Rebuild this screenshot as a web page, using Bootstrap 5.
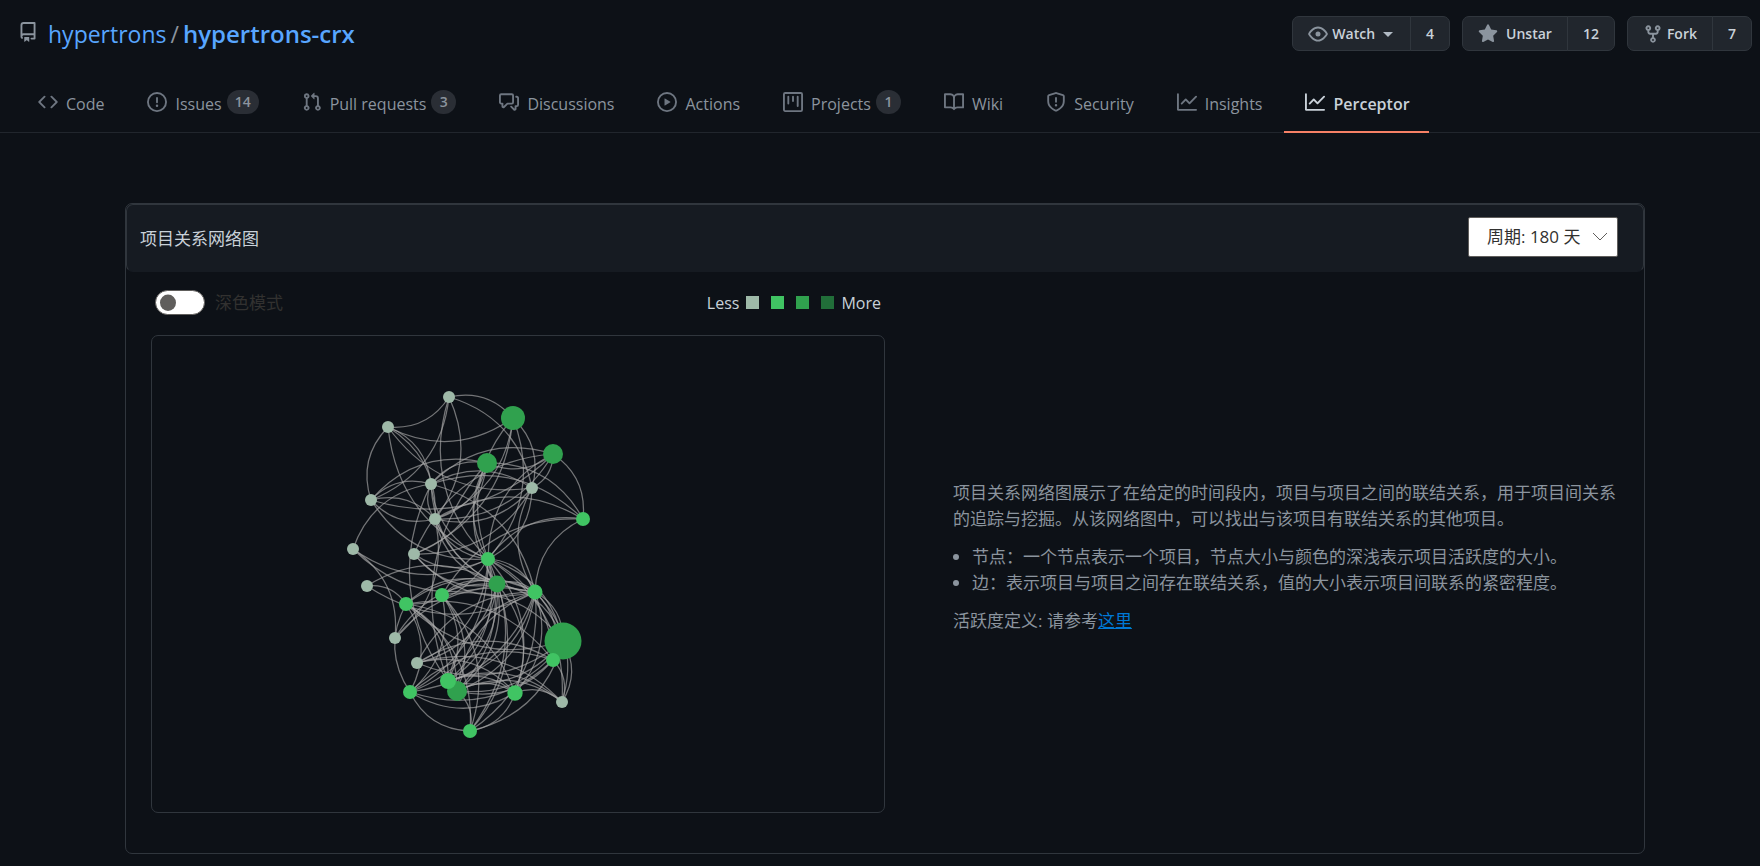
<!DOCTYPE html>
<html lang="zh-CN" data-bs-theme="dark">
<head>
<meta charset="utf-8">
<meta name="viewport" content="width=device-width, initial-scale=1">
<title>hypertrons/hypertrons-crx · Perceptor</title>
<link href="https://cdn.jsdelivr.net/npm/bootstrap@5.3.0/dist/css/bootstrap.min.css" rel="stylesheet">
<style>
  body { background: #0d1117; color: #c9d1d9; font-family: "Open Sans", "Noto Sans CJK SC", sans-serif; font-size: 16px; line-height: 26px; }
  svg.octicon { width: 20px; height: 20px; fill: currentColor; flex: none; }
  .repo-head { padding: 16px 8px 0 18px; }
  .repo-title { font-size: 23px; line-height: 36px; color: #8b949e; }
  .repo-title a { color: #58a6ff; text-decoration: none; }
  .repo-title .repo-name { font-size: 24px; font-weight: 600; }
  .repo-title .octicon { margin-right: 10px; }
  .gh-group .btn { background: #21262d; border: 1px solid #30363d; color: #c9d1d9; font-size: 14px; font-weight: 600; line-height: 25px; padding: 4px 15px; border-radius: 7px; }
  .gh-group .octicon { color: #8b949e; }
  .gh-caret { border: 5px solid transparent; border-top-color: #b1bac4; border-bottom: 0; margin: 2px 2px 0 8px; }
  .repo-tabs { padding-left: 17px; margin-top: 20px; border-bottom: 1px solid #21262d; }
  .repo-tabs .nav-link { color: #8b949e; padding: 18px 22px 13px 21px; gap: 8px; margin-bottom: -1px; border-bottom: 2px solid transparent; border-radius: 0; line-height: 28px; }
  .repo-tabs .nav-link .octicon { color: #6e7681; margin-bottom: 4px; }
  .repo-tabs .nav-link.active { color: #c9d1d9; font-weight: 600; border-bottom-color: #f78166; padding-right: 19px; }
  .repo-tabs .active .octicon { color: #c9d1d9; }
  .tab-count { background: #2a2e35; color: #8b949e; font-size: 14px; font-weight: 600; line-height: 24px; border-radius: 12px; padding: 0 8px; min-width: 25px; text-align: center; margin: 0 0 4px -3px; }
  .page-main { padding: 70px 115px 12px 125px; }
  .panel { border: 1px solid #30363d; border-radius: 7px; }
  .panel-head { background: #161b22; border: 1px solid #30363d; border-bottom-color: #161b22; border-radius: 7px; padding: 12px 25px 14px 13px; }
  .panel-head h1 { color: #c9d1d9; font-size: 17px; line-height: 40px; font-weight: 400; margin: 2px 0 -2px; }
  .period-select { appearance: none; width: 150px; height: 40px; border: 1px solid #605e5c; border-radius: 2px; color: #323130; font-size: 17px; padding: 0 0 0 18px;
    background: #fff url("data:image/svg+xml,%3Csvg xmlns='http://www.w3.org/2000/svg' width='16' height='10' fill='none' stroke='%23605e5c'%3E%3Cpath d='M1 1l7 7 7-7'/%3E%3C/svg%3E") no-repeat right 9px center; }
  .graph-col { padding: 0 0 40px 25px; }
  .graph-tools { height: 63px; padding: 0 4px 2px; }
  .form-switch .mode-toggle.form-check-input { width: 50px; height: 25px; margin: 0; background: #fff url("data:image/svg+xml,%3Csvg xmlns='http://www.w3.org/2000/svg' width='24' height='24' viewBox='-12 -12 24 24'%3E%3Ccircle r='8' fill='%23605e5c'/%3E%3C/svg%3E") no-repeat left center; background-size: 24px 24px; border: 1px solid #605e5c; }
  .mode-label { color: #323130; font-size: 17px; padding-left: 10px; }
  .legend { margin: 0 7px; }
  .swatch { width: 13px; height: 13px; }
  .s1 { background: #9eb9a8; fill: #9eb9a8; } .s2 { background: #40c463; fill: #40c463; }
  .s3 { background: #30a14e; fill: #30a14e; } .s4 { background: #216e39; fill: #216e39; }
  .graph-box { border: 1px solid #30363d; border-radius: 7px; }
  .graph-box svg { display: block; width: 100%; }
  .edge { fill: none; stroke: #aaa; stroke-opacity: .65; stroke-width: 1.25; }
  .note-col { padding: 0 8px 0 68px; color: #8b949e; font-size: 17px; }
  .note-col p { margin-bottom: 12px; }
  .note-col ul { padding-left: 19px; margin-bottom: 12px; }
  .note-col .inner { max-width: 679px; }
  .note-col a { color: #0078d4; }
</style>
</head>
<body>
<header>
  <div class="repo-head d-flex justify-content-between align-items-start">
    <div class="repo-title d-flex align-items-center">
      <svg class="octicon mb-1" viewBox="0 0 16 16"><path fill-rule="evenodd" d="M2 2.5A2.5 2.5 0 014.5 0h8.75a.75.75 0 01.75.75v12.5a.75.75 0 01-.75.75h-2.5a.75.75 0 110-1.5h1.75v-2h-8a1 1 0 00-.714 1.7.75.75 0 01-1.072 1.05A2.495 2.495 0 012 11.5v-9zm10.5-1V9h-8c-.356 0-.694.074-1 .208V2.5a1 1 0 011-1h8zM5 12.25v3.25a.25.25 0 00.4.2l1.45-1.087a.25.25 0 01.3 0L8.6 15.7a.25.25 0 00.4-.2v-3.25a.25.25 0 00-.25-.25h-3.5a.25.25 0 00-.25.25z"/></svg>
      <a href="#">hypertrons</a><span class="mx-1">/</span><a href="#" class="repo-name">hypertrons-crx</a>
    </div>
    <div class="d-flex gh-actions">
      <div class="btn-group gh-group me-2"><button class="btn d-flex align-items-center" type="button"><svg class="octicon me-1" viewBox="0 0 16 16"><path fill-rule="evenodd" d="M1.679 7.932c.412-.621 1.242-1.75 2.366-2.717C5.175 4.242 6.527 3.5 8 3.5c1.473 0 2.824.742 3.955 1.715 1.124.967 1.954 2.096 2.366 2.717a.119.119 0 010 .136c-.412.621-1.242 1.75-2.366 2.717C10.825 11.758 9.473 12.5 8 12.5c-1.473 0-2.824-.742-3.955-1.715C2.92 9.818 2.09 8.69 1.679 8.068a.119.119 0 010-.136zM8 2c-1.981 0-3.67.992-4.933 2.078C1.797 5.169.88 6.423.43 7.1a1.619 1.619 0 000 1.798c.45.678 1.367 1.932 2.637 3.024C4.329 13.008 6.019 14 8 14c1.981 0 3.67-.992 4.933-2.078 1.27-1.091 2.187-2.345 2.637-3.023a1.619 1.619 0 000-1.798c-.45-.678-1.367-1.932-2.637-3.023C11.671 2.992 9.981 2 8 2zm0 8a2 2 0 100-4 2 2 0 000 4z"/></svg>Watch<span class="gh-caret"></span></button><button class="btn" type="button">4</button></div>
      <div class="btn-group gh-group mx-1"><button class="btn d-flex align-items-center" type="button"><svg class="octicon me-2" viewBox="0 0 16 16"><path d="M8 .25a.75.75 0 01.673.418l1.882 3.815 4.21.612a.75.75 0 01.416 1.279l-3.046 2.97.719 4.192a.75.75 0 01-1.088.791L8 12.347l-3.766 1.98a.75.75 0 01-1.088-.79l.72-4.194L.818 6.374a.75.75 0 01.416-1.28l4.21-.611L7.327.668A.75.75 0 018 .25z"/></svg>Unstar</button><button class="btn" type="button">12</button></div>
      <div class="btn-group gh-group ms-2"><button class="btn d-flex align-items-center" type="button"><svg class="octicon me-1" viewBox="0 0 16 16"><path fill-rule="evenodd" d="M5 3.25a.75.75 0 11-1.5 0 .75.75 0 011.5 0zm0 2.122a2.25 2.25 0 10-1.5 0v.878A2.25 2.25 0 005.75 8.5h1.5v2.128a2.251 2.251 0 101.5 0V8.5h1.5a2.25 2.25 0 002.25-2.25v-.878a2.25 2.25 0 10-1.5 0v.878a.75.75 0 01-.75.75h-4.5A.75.75 0 015 6.25v-.878zm3.75 7.378a.75.75 0 11-1.5 0 .75.75 0 011.5 0zm3-8.75a.75.75 0 100-1.5.75.75 0 000 1.5z"/></svg>Fork</button><button class="btn" type="button">7</button></div>
    </div>
  </div>
  <nav class="nav repo-tabs flex-nowrap">
    <a class="nav-link d-flex align-items-center" href="#"><svg class="octicon" viewBox="0 0 16 16"><path fill-rule="evenodd" d="M4.72 3.22a.75.75 0 011.06 1.06L2.06 8l3.72 3.72a.75.75 0 11-1.06 1.06L.47 8.53a.75.75 0 010-1.06l4.25-4.25zm6.56 0a.75.75 0 10-1.06 1.06L13.94 8l-3.72 3.72a.75.75 0 101.06 1.06l4.25-4.25a.75.75 0 000-1.06l-4.25-4.25z"/></svg>Code</a>
    <a class="nav-link d-flex align-items-center" href="#"><svg class="octicon" viewBox="0 0 16 16"><path fill-rule="evenodd" d="M8 1.5a6.5 6.5 0 100 13 6.5 6.5 0 000-13zM0 8a8 8 0 1116 0A8 8 0 010 8zm9 3a1 1 0 11-2 0 1 1 0 012 0zm-.25-6.25a.75.75 0 00-1.5 0v3.5a.75.75 0 001.5 0v-3.5z"/></svg>Issues<span class="tab-count">14</span></a>
    <a class="nav-link d-flex align-items-center" href="#"><svg class="octicon" viewBox="0 0 16 16"><path fill-rule="evenodd" d="M7.177 3.073L9.573.677A.25.25 0 0110 .854v4.792a.25.25 0 01-.427.177L7.177 3.427a.25.25 0 010-.354zM3.75 2.5a.75.75 0 100 1.5.75.75 0 000-1.5zm-2.25.75a2.25 2.25 0 113 2.122v5.256a2.251 2.251 0 11-1.5 0V5.372A2.25 2.25 0 011.5 3.25zM11 2.5h-1V4h1a1 1 0 011 1v5.628a2.251 2.251 0 101.5 0V5A2.5 2.5 0 0011 2.5zm1 10.25a.75.75 0 111.5 0 .75.75 0 01-1.5 0zM3.75 12a.75.75 0 100 1.5.75.75 0 000-1.5z"/></svg>Pull requests<span class="tab-count">3</span></a>
    <a class="nav-link d-flex align-items-center" href="#"><svg class="octicon" viewBox="0 0 16 16"><path fill-rule="evenodd" d="M1.5 2.75a.25.25 0 01.25-.25h8.5a.25.25 0 01.25.25v5.5a.25.25 0 01-.25.25h-3.5a.75.75 0 00-.53.22L3.5 11.44V9.25a.75.75 0 00-.75-.75h-1a.25.25 0 01-.25-.25v-5.5zM1.75 1A1.75 1.75 0 000 2.75v5.5C0 9.216.784 10 1.75 10H2v1.543a1.457 1.457 0 002.487 1.03L7.061 10h3.189A1.75 1.75 0 0012 8.25v-5.5A1.75 1.75 0 0010.25 1h-8.5zM14.5 4.75a.25.25 0 00-.25-.25h-.5a.75.75 0 110-1.5h.5c.966 0 1.75.784 1.75 1.75v5.5A1.75 1.75 0 0114.25 12H14v1.543a1.457 1.457 0 01-2.487 1.03L9.22 12.28a.75.75 0 111.06-1.06l2.22 2.22v-2.19a.75.75 0 01.75-.75h1a.25.25 0 00.25-.25v-5.5z"/></svg>Discussions</a>
    <a class="nav-link d-flex align-items-center" href="#"><svg class="octicon" viewBox="0 0 16 16"><path fill-rule="evenodd" d="M1.5 8a6.5 6.5 0 1113 0 6.5 6.5 0 01-13 0zM8 0a8 8 0 100 16A8 8 0 008 0zM6.379 5.227A.25.25 0 006 5.442v5.117a.25.25 0 00.379.214l4.264-2.559a.25.25 0 000-.428L6.379 5.227z"/></svg>Actions</a>
    <a class="nav-link d-flex align-items-center" href="#"><svg class="octicon" viewBox="0 0 16 16"><path fill-rule="evenodd" d="M1.75 0A1.75 1.75 0 000 1.75v12.5C0 15.216.784 16 1.75 16h12.5A1.75 1.75 0 0016 14.25V1.75A1.75 1.75 0 0014.25 0H1.75zM1.5 1.75a.25.25 0 01.25-.25h12.5a.25.25 0 01.25.25v12.5a.25.25 0 01-.25.25H1.75a.25.25 0 01-.25-.25V1.75zM11.75 3a.75.75 0 00-.75.75v7.5a.75.75 0 001.5 0v-7.5a.75.75 0 00-.75-.75zm-8.25.75a.75.75 0 011.5 0v5.5a.75.75 0 01-1.5 0v-5.5zM8 3a.75.75 0 00-.75.75v3.5a.75.75 0 001.5 0v-3.5A.75.75 0 008 3z"/></svg>Projects<span class="tab-count">1</span></a>
    <a class="nav-link d-flex align-items-center" href="#"><svg class="octicon" viewBox="0 0 16 16"><path fill-rule="evenodd" d="M0 1.75A.75.75 0 01.75 1h4.253c1.227 0 2.317.59 3 1.501A3.744 3.744 0 0111.006 1h4.245a.75.75 0 01.75.75v10.5a.75.75 0 01-.75.75h-4.507a2.25 2.25 0 00-1.591.659l-.622.621a.75.75 0 01-1.06 0l-.622-.621A2.25 2.25 0 005.258 13H.75a.75.75 0 01-.75-.75V1.75zm8.755 3a2.25 2.25 0 012.25-2.25H14.5v9h-3.757c-.71 0-1.4.201-1.992.572l.004-7.322zm-1.504 7.324l.004-5.073-.002-2.253A2.25 2.25 0 005.003 2.5H1.5v9h3.757a3.75 3.75 0 011.994.574z"/></svg>Wiki</a>
    <a class="nav-link d-flex align-items-center" href="#"><svg class="octicon" viewBox="0 0 16 16"><path fill-rule="evenodd" d="M7.467.133a1.75 1.75 0 011.066 0l5.25 1.68A1.75 1.75 0 0115 3.48V7c0 1.566-.32 3.182-1.303 4.682-.983 1.498-2.585 2.813-5.032 3.855a1.7 1.7 0 01-1.33 0c-2.447-1.042-4.049-2.357-5.032-3.855C1.32 10.182 1 8.566 1 7V3.48a1.75 1.75 0 011.217-1.667l5.25-1.68zm.61 1.429a.25.25 0 00-.153 0l-5.25 1.68a.25.25 0 00-.174.238V7c0 1.358.275 2.666 1.057 3.86.784 1.194 2.121 2.34 4.366 3.297a.2.2 0 00.154 0c2.245-.956 3.582-2.104 4.366-3.298C13.225 9.666 13.5 8.36 13.5 7V3.48a.25.25 0 00-.174-.237l-5.25-1.68zM9 10.5a1 1 0 11-2 0 1 1 0 012 0zm-.25-5.75a.75.75 0 10-1.5 0v3a.75.75 0 001.5 0v-3z"/></svg>Security</a>
    <a class="nav-link d-flex align-items-center" href="#"><svg class="octicon" viewBox="0 0 16 16"><path fill-rule="evenodd" d="M1.5 1.75a.75.75 0 00-1.5 0v12.5c0 .414.336.75.75.75h14.5a.75.75 0 000-1.5H1.5V1.75zm14.28 2.53a.75.75 0 00-1.06-1.06L10 7.94 7.53 5.47a.75.75 0 00-1.06 0L3.22 8.72a.75.75 0 001.06 1.06L7 7.06l2.47 2.47a.75.75 0 001.06 0l5.25-5.25z"/></svg>Insights</a>
    <a class="nav-link d-flex align-items-center active" aria-current="page" href="#"><svg class="octicon" viewBox="0 0 16 16"><path fill-rule="evenodd" d="M1.5 1.75a.75.75 0 00-1.5 0v12.5c0 .414.336.75.75.75h14.5a.75.75 0 000-1.5H1.5V1.75zm14.28 2.53a.75.75 0 00-1.06-1.06L10 7.94 7.53 5.47a.75.75 0 00-1.06 0L3.22 8.72a.75.75 0 001.06 1.06L7 7.06l2.47 2.47a.75.75 0 001.06 0l5.25-5.25z"/></svg>Perceptor</a>
  </nav>
</header>

<main class="page-main">
  <section class="panel">
    <div class="panel-head d-flex justify-content-between align-items-start">
      <h1>项目关系网络图</h1>
      <select class="period-select" aria-label="周期"><option>周期: 180 天</option></select>
    </div>
    <div class="row g-0">
      <div class="col-6 graph-col">
        <div class="graph-tools d-flex justify-content-between align-items-center">
          <div class="form-switch d-flex align-items-center p-0">
            <input class="form-check-input mode-toggle" type="checkbox" role="switch" id="darkMode">
            <label class="mode-label" for="darkMode">深色模式</label>
          </div>
          <div class="d-flex align-items-center">
            <span>Less</span>
            <span class="d-flex gap-2 legend"><i class="swatch s1"></i><i class="swatch s2 ms-1"></i><i class="swatch s3 ms-1"></i><i class="swatch s4 ms-1"></i></span>
            <span>More</span>
          </div>
        </div>
        <div class="graph-box">
          <svg id="network" viewBox="152 336 732 476" role="img" aria-label="项目关系网络图"></svg>
        </div>
      </div>
      <div class="col-6 note-col d-flex align-items-center">
        <div class="inner">
          <p>项目关系网络图展示了在给定的时间段内，项目与项目之间的联结关系，用于项目间关系的追踪与挖掘。从该网络图中，可以找出与该项目有联结关系的其他项目。</p>
          <ul>
            <li>节点：一个节点表示一个项目，节点大小与颜色的深浅表示项目活跃度的大小。</li>
            <li>边：表示项目与项目之间存在联结关系，值的大小表示项目间联系的紧密程度。</li>
          </ul>
          <p>活跃度定义: 请参考<a href="#">这里</a></p>
        </div>
      </div>
    </div>
  </section>
</main>

<script src="https://cdn.jsdelivr.net/npm/bootstrap@5.3.0/dist/js/bootstrap.bundle.min.js"></script>
<script>
  // id: [x, y, radius, activity level]
  const nodes = {
    A: [449, 397, 6, 1], B: [513, 418, 12, 3], C: [388, 427, 6, 1], D: [553, 454, 10, 3],
    E: [487, 463, 10, 3], F: [431, 484, 6, 1], G: [532, 488, 6, 1], H: [371, 500, 6, 1],
    I: [435, 519, 6, 1], J: [583, 519, 7, 2], K: [353, 549, 6, 1], L: [414, 554, 6, 1],
    M: [488, 559, 7, 2], N: [497, 584, 8.5, 3], O: [535, 592, 7.5, 2], P: [442, 595, 7, 2],
    Q: [406, 604, 7, 2], R: [367, 586, 6, 1], S: [395, 638, 6, 1], T: [417, 663, 6, 1],
    U: [563, 641, 18.5, 3], V: [553, 660, 7, 2], X: [457, 691, 10, 3], W: [448, 681, 8, 2],
    Y: [410, 692, 7, 2], Z: [515, 693, 7.7, 2], a: [562, 702, 6, 1], b: [470, 731, 7, 2]
  };
  const edges = ('AB AC AG AH AI MA BG BC BM MB BL BI GC CI CF MC HC HI IH HE DH HF KF KS MK NK MH ' +
    'FE EJ DE EI EL ME NE WE NM FD DJ DI MD LD DG FG MF NF IF FO IJ FJ GI GL OG GM MI NI OI WF ' +
    'OJ MJ PJ ML OL NL IS RN RQ OR SN SO TO ' +
    'MO MU MV MZ Ma Mb MW MX MY MQ MT NU NO NZ Nb NW NX NY NT QN PN ' +
    'OU OV QO PO OW OX OY OZ Oa Va Ob PU QV UT UW UX VX VY Ub Ua UQ ' +
    'QY QW QX Qb QZ YQ PW PY PX Pb TV TZ WZ XZ Wa Xa Ta Za ZY YV Zb Xb bY WO XO').split(' ');
  const CURVENESS = 0.3;
  const NS = 'http://www.w3.org/2000/svg';
  const svg = document.getElementById('network');
  const add = (name, attrs) => {
    const el = document.createElementNS(NS, name);
    for (const k in attrs) el.setAttribute(k, attrs[k]);
    svg.appendChild(el);
  };
  edges.forEach(e => {
    const [x1, y1] = nodes[e[0]], [x2, y2] = nodes[e[1]];
    const cx = (x1 + x2) / 2 + (y2 - y1) * CURVENESS;
    const cy = (y1 + y2) / 2 - (x2 - x1) * CURVENESS;
    // an edge runs clockwise from its first node to its second
    add('path', { class: 'edge', d: `M${x1} ${y1}Q${cx} ${cy} ${x2} ${y2}` });
  });
  Object.values(nodes).forEach(([cx, cy, r, level]) => add('circle', { cx, cy, r, class: 's' + level }));
</script>
</body>
</html>
